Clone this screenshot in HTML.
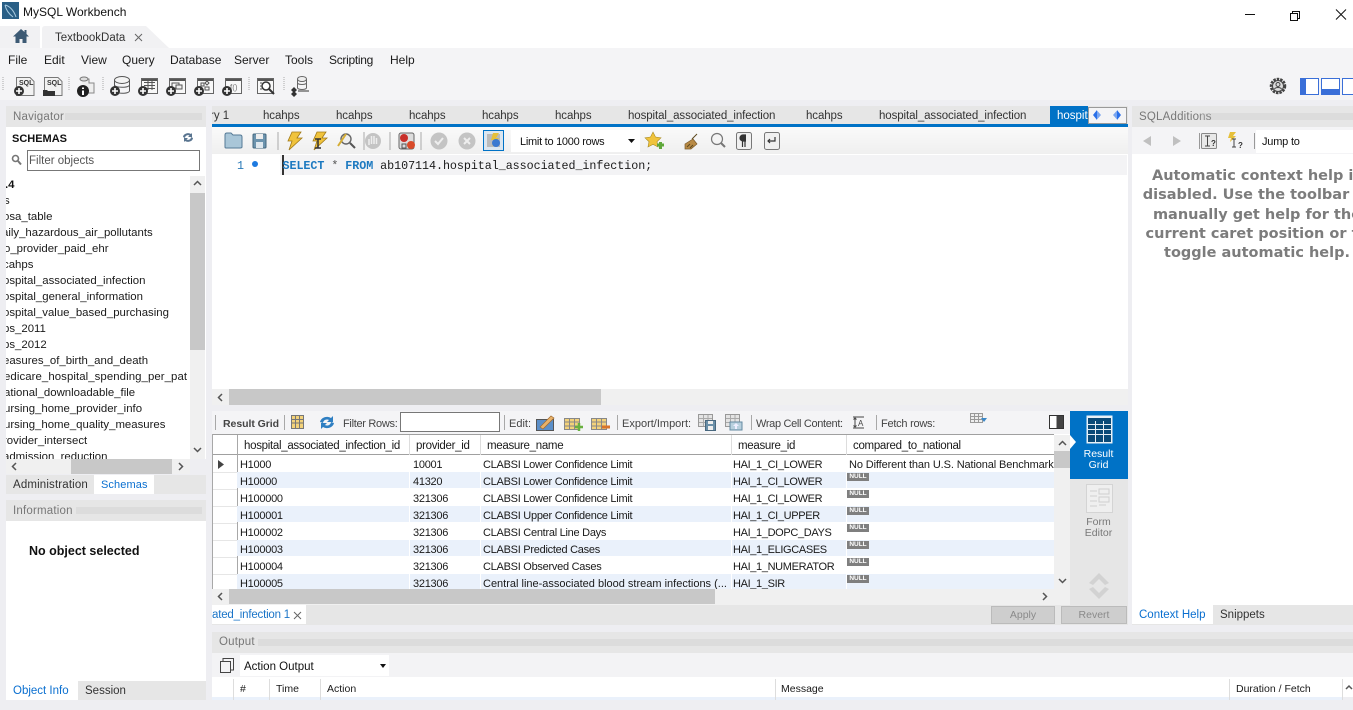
<!DOCTYPE html>
<html><head><meta charset="utf-8"><title>MySQL Workbench</title>
<style>
html,body{margin:0;padding:0;width:1353px;height:710px;overflow:hidden;background:#eeeef2;font-family:"Liberation Sans",sans-serif;font-size:11.5px;color:#1a1a1a}
.b,.t,svg.i{position:absolute}
.t{white-space:nowrap;line-height:16px}
.clip{position:absolute;overflow:hidden}
.dots{position:absolute;height:7px;background-image:radial-gradient(#bcbcbc 0.55px,transparent 0.65px);background-size:2px 2px}
.h{color:#777;font-size:11.5px;letter-spacing:.2px}
.m{font-size:12px}
.s{background:#c8c8c8}
.mono{font-family:"Liberation Mono",monospace;font-size:11.7px;letter-spacing:-.04px;color:#1a1a1a}
.n{position:absolute;left:847px;width:22px;height:8px;background:#7f7f7f;color:#fff;font-size:6.5px;font-weight:bold;line-height:8px;text-align:center}
.row{position:absolute;left:237px;width:817px;height:16px}
.sep{position:absolute;width:1px;background:#a8a8a8}
.gh{letter-spacing:-.3px}
.cells .t{letter-spacing:-.27px}
.cells .t.q{letter-spacing:-.35px}
.help{position:absolute;left:-50px;width:350px;text-align:center;white-space:nowrap;font:bold 14.500px/18px 'DejaVu Sans',sans-serif;color:#7c7c7c}
</style></head><body>

<!-- title bar -->
<div class="b" style="left:0;top:0;width:1353px;height:48px;background:#fff"></div>
<svg class="i" style="left:2px;top:2px" width="17" height="17" viewBox="0 0 17 17"><rect width="17" height="17" fill="#2a5f86"/><path d="M3 3C8 4 12 9 14 15M3 3c1 5 4 9 8 12" stroke="#a9cbe0" stroke-width="1" fill="none"/></svg>
<div class="t" style="left:23px;top:4px;font-size:12px;color:#111">MySQL Workbench</div>
<svg class="i" style="left:1245px;top:8px" width="108" height="13" viewBox="0 0 108 13" fill="none" stroke="#111" stroke-width="1"><path d="M0 6.500H10"/><path d="M45.500 5.500h7v7h-7zM47.500 5.500v-2h7v7h-2"/><path d="M91 1.500l10 10M101 1.500l-10 10"/></svg>

<!-- home and connection tab -->
<div class="b" style="left:0;top:26px;width:40px;height:22px;background:#f1f1f3"></div>
<svg class="i" style="left:12px;top:28px" width="18" height="16" viewBox="0 0 18 16"><path d="M9 1L1 8.500h2.500V15h4v-4h3v4h4V8.500H17L14.500 6V2h-2v2z" fill="#3d5a74"/></svg>
<svg class="i" style="left:42px;top:26px" width="128" height="22" viewBox="0 0 128 22"><path d="M0 22V3Q0 0 3 0H104L127 22z" fill="#f1f1f3"/></svg>
<div class="t" style="left:55px;top:30px;font-size:11.500px;color:#333">TextbookData</div>
<svg class="i" style="left:134px;top:33px" width="9" height="9" viewBox="0 0 9 9"><path d="M1 1l7 7M8 1L1 8" stroke="#666" stroke-width="1"/></svg>

<!-- menu -->
<div class="b" style="left:0;top:48px;width:1353px;height:52px;background:#f4f4f6"></div>
<div class="t m" style="left:8px;top:52px">File</div>
<div class="t m" style="left:44px;top:52px">Edit</div>
<div class="t m" style="left:81px;top:52px">View</div>
<div class="t m" style="left:122px;top:52px">Query</div>
<div class="t m" style="left:170px;top:52px">Database</div>
<div class="t m" style="left:234px;top:52px">Server</div>
<div class="t m" style="left:285px;top:52px">Tools</div>
<div class="t m" style="left:329px;top:52px;letter-spacing:-.3px">Scripting</div>
<div class="t m" style="left:390px;top:52px">Help</div>

<!-- main toolbar -->
<svg class="i" style="left:0;top:70px" width="340" height="30" viewBox="0 0 340 30">
<defs>
<g id="plus"><circle cx="0" cy="0" r="5" fill="#333"/><path d="M-3 0H3M0-3V3" stroke="#fff" stroke-width="1.600"/></g>
<g id="doc"><path d="M.500.500H14l4 4V18.500H.500z" fill="#f2f2f2" stroke="#777"/></g>
<g id="win"><rect x=".5" y=".5" width="16" height="15" fill="#f8f8f8" stroke="#666"/><rect x="1" y="1" width="15" height="2" fill="#555"/></g>
</defs>
<path d="M3 7v14M69 7v14M103 7v14M249 7v14M284 7v14" stroke="#aaa" stroke-dasharray="1 1"/>
<use href="#doc" x="16" y="7"/><text x="19" y="15" font-family="Liberation Sans" font-size="7" font-weight="bold" fill="#333">SQL</text><use href="#plus" x="19" y="21"/>
<use href="#doc" x="44" y="7"/><text x="47" y="15" font-family="Liberation Sans" font-size="7" font-weight="bold" fill="#333">SQL</text><path d="M43 26v-6h4l1 1h7v5z" fill="#333"/>
<path d="M80 9h9v4h5v10H88" fill="#eee" stroke="#888"/><ellipse cx="84" cy="9" rx="4" ry="2" fill="#ddd" stroke="#777"/><circle cx="83" cy="21" r="6" fill="#222"/><path d="M83 17.500v1.500M83 20.500V25" stroke="#fff" stroke-width="2"/>
<ellipse cx="122" cy="10" rx="7.500" ry="3.500" fill="#f4f4f4" stroke="#555"/><path d="M114.500 10v11c1 3 14 3 15 0V10M114.500 15c1 3 14 3 15 0" fill="none" stroke="#555"/><use href="#plus" x="115" y="21"/>
<use href="#win" x="141" y="8"/><path d="M144 12.500h11M144 15.500h11M144 18.500h11M148 11v9M152 11v9" stroke="#555"/><use href="#plus" x="143" y="21"/>
<use href="#win" x="169" y="8"/><rect x="172" y="13" width="7" height="5" fill="none" stroke="#555"/><rect x="176" y="15" width="6" height="4" fill="#eee" stroke="#555"/><use href="#plus" x="171" y="21"/>
<use href="#win" x="197" y="8"/><path d="M207 11l2 2-2 2-2-2zM205 17h4v3h-4zM201 13h3v3h-3z" fill="none" stroke="#555"/><use href="#plus" x="199" y="21"/>
<use href="#win" x="225" y="8"/><text x="230" y="20" font-family="Liberation Sans" font-size="8" fill="#777">f()</text><use href="#plus" x="227" y="21"/>
<use href="#win" x="257" y="8"/><circle cx="266" cy="16" r="4" fill="#fff" stroke="#333" stroke-width="1.500"/><path d="M269 19l5 5" stroke="#333" stroke-width="2"/><path d="M260 13h2M260 16h2M260 19h2" stroke="#555"/>
<ellipse cx="302" cy="9" rx="4.500" ry="2.500" fill="#eee" stroke="#666"/><path d="M297.500 9v9c1 2 8 2 9 0V9M297.500 13c1 2 8 2 9 0" fill="none" stroke="#666"/><path d="M298 21h11" stroke="#333"/><path d="M294 17l3 3-3 3-3-3zM294 21l3 3-3 3-3-3z" fill="#333"/>
</svg>
<svg class="i" style="left:1269px;top:77px" width="18" height="18" viewBox="0 0 18 18"><circle cx="9" cy="9" r="7" fill="none" stroke="#444" stroke-width="2.500" stroke-dasharray="2.500 1"/><circle cx="9" cy="9" r="5.500" fill="#ddd" stroke="#444"/><circle cx="9" cy="7.500" r="2" fill="none" stroke="#444"/><path d="M5.500 12c1-2 6-2 7 0" fill="none" stroke="#444"/></svg>
<svg class="i" style="left:1297px;top:77px" width="56" height="20" viewBox="0 0 56 20"><path d="M.5 2v16" stroke="#bbb" stroke-dasharray="1 1" transform="translate(-1 0)"/><rect x="3.500" y="1.500" width="18" height="16" fill="#fff" stroke="#3a6fd8"/><rect x="3" y="1" width="6" height="17" fill="#3a6fd8"/><rect x="24.500" y="1.500" width="18" height="16" fill="#fff" stroke="#3a6fd8"/><rect x="24" y="12" width="19" height="6" fill="#3a6fd8"/><rect x="45.500" y="1.500" width="18" height="16" fill="#fff" stroke="#3a6fd8"/></svg>

<!-- navigator -->
<div class="b" style="left:6px;top:106px;width:200px;height:21px;background:#e6e6e6"></div>
<div class="t h" style="left:13px;top:109px">Navigator</div>
<div class="dots" style="left:65px;top:113px;width:137px"></div>
<div class="b" style="left:6px;top:127px;width:200px;height:332px;background:#fff"></div>
<div class="t" style="left:12px;top:131px;font-weight:bold;font-size:11px;color:#111">SCHEMAS</div>
<svg class="i" style="left:182px;top:132px" width="12" height="11" viewBox="0 0 12 11"><path d="M1 5a5 4 0 0 1 8-3l1-1v4H6l1.500-1.500A3 3 0 0 0 3 6zM11 6a5 4 0 0 1-8 3l-1 1V6h4L4.500 7.500A3 3 0 0 0 9 5z" fill="#5a7590"/></svg>
<svg class="i" style="left:11px;top:154px" width="11" height="12" viewBox="0 0 11 12"><circle cx="4.500" cy="4.500" r="3" fill="none" stroke="#777" stroke-width="1.600"/><path d="M7 7l3 3.500" stroke="#777" stroke-width="2"/></svg>
<div class="b" style="left:27px;top:150px;width:171px;height:19px;background:#fff;border:1px solid #777"></div>
<div class="t" style="left:29px;top:153px;color:#555;font-size:11.5px">Filter objects</div>
<div class="clip" style="left:6px;top:177px;width:184px;height:282px;font-size:11.400px">
<div class="t" style="left:-1px;top:0;font-weight:bold;color:#111">.4</div>
<div class="t" style="left:-2px;top:16px">s</div>
<div class="t" style="left:-3px;top:32px">osa_table</div>
<div class="t" style="left:-4px;top:48px">aily_hazardous_air_pollutants</div>
<div class="t" style="left:-2px;top:64px">o_provider_paid_ehr</div>
<div class="t" style="left:-3px;top:80px">cahps</div>
<div class="t" style="left:-3px;top:96px">ospital_associated_infection</div>
<div class="t" style="left:-3px;top:112px">ospital_general_information</div>
<div class="t" style="left:-3px;top:128px">ospital_value_based_purchasing</div>
<div class="t" style="left:-3px;top:144px">ps_2011</div>
<div class="t" style="left:-3px;top:160px">ps_2012</div>
<div class="t" style="left:-3px;top:176px">easures_of_birth_and_death</div>
<div class="t" style="left:-2px;top:192px;letter-spacing:.08px">edicare_hospital_spending_per_pat</div>
<div class="t" style="left:-2px;top:208px">ational_downloadable_file</div>
<div class="t" style="left:-2px;top:224px">ursing_home_provider_info</div>
<div class="t" style="left:-2px;top:240px">ursing_home_quality_measures</div>
<div class="t" style="left:-3px;top:256px">rovider_intersect</div>
<div class="t" style="left:-3px;top:272px">admission_reduction</div>
</div>
<div class="b" style="left:190px;top:176px;width:15px;height:283px;background:#f0f0f0"></div>
<div class="b s" style="left:190px;top:193px;width:15px;height:157px"></div>
<svg class="i" style="left:193px;top:180px" width="9" height="6" viewBox="0 0 9 6"><path d="M1 5l3.500-3.500L8 5" fill="none" stroke="#555" stroke-width="1.500"/></svg>
<svg class="i" style="left:193px;top:447px" width="9" height="6" viewBox="0 0 9 6"><path d="M1 1l3.500 3.500L8 1" fill="none" stroke="#555" stroke-width="1.500"/></svg>
<div class="b" style="left:6px;top:459px;width:184px;height:15px;background:#f0f0f0"></div>
<div class="b s" style="left:71px;top:459px;width:101px;height:15px"></div>
<svg class="i" style="left:11px;top:462px" width="6" height="9" viewBox="0 0 6 9"><path d="M5 1L1.500 4.500 5 8" fill="none" stroke="#555" stroke-width="1.500"/></svg>
<svg class="i" style="left:178px;top:462px" width="6" height="9" viewBox="0 0 6 9"><path d="M1 1l3.500 3.500L1 8" fill="none" stroke="#555" stroke-width="1.500"/></svg>
<div class="b" style="left:6px;top:475px;width:200px;height:19px;background:#e6e6e6"></div>
<div class="b" style="left:94px;top:475px;width:60px;height:19px;background:#fff"></div>
<div class="t" style="left:13px;top:477px;color:#333;letter-spacing:.15px">Administration</div>
<div class="t" style="left:101px;top:477px;color:#0a6fd0;font-size:11px;letter-spacing:.1px">Schemas</div>

<!-- information -->
<div class="b" style="left:6px;top:500px;width:200px;height:21px;background:#e6e6e6"></div>
<div class="t h" style="left:13px;top:503px">Information</div>
<div class="dots" style="left:76px;top:507px;width:126px"></div>
<div class="b" style="left:6px;top:521px;width:200px;height:160px;background:#fff"></div>
<div class="t" style="left:29px;top:543px;font-weight:bold;font-size:12.5px;color:#111">No object selected</div>
<div class="b" style="left:6px;top:681px;width:200px;height:19px;background:#e6e6e6"></div>
<div class="b" style="left:6px;top:681px;width:72px;height:19px;background:#fff"></div>
<div class="t" style="left:13px;top:683px;color:#0a6fd0">Object Info</div>
<div class="t" style="left:85px;top:683px;color:#333">Session</div>

<!-- query tabs -->
<div class="b" style="left:212px;top:106px;width:916px;height:18px;background:#e6e6e6"></div>
<div class="b" style="left:212px;top:124px;width:916px;height:3px;background:#0072c6"></div>
<div class="clip" style="left:212px;top:107px;width:838px;height:17px">
<div class="t" style="left:-2px;top:1px;color:#333">ry 1</div>
<div class="t" style="left:51px;top:1px;color:#333;letter-spacing:-.1px">hcahps</div>
<div class="t" style="left:124px;top:1px;color:#333;letter-spacing:-.1px">hcahps</div>
<div class="t" style="left:197px;top:1px;color:#333;letter-spacing:-.1px">hcahps</div>
<div class="t" style="left:270px;top:1px;color:#333;letter-spacing:-.1px">hcahps</div>
<div class="t" style="left:343px;top:1px;color:#333;letter-spacing:-.1px">hcahps</div>
<div class="t" style="left:416px;top:1px;color:#333;letter-spacing:-.1px">hospital_associated_infection</div>
<div class="t" style="left:594px;top:1px;color:#333;letter-spacing:-.1px">hcahps</div>
<div class="t" style="left:667px;top:1px;color:#333;letter-spacing:-.1px">hospital_associated_infection</div>
</div>
<div class="clip" style="left:1050px;top:106px;width:38px;height:18px;background:#0072c6"><div class="t" style="left:7px;top:2px;color:#fff">hospital</div></div>
<div class="b" style="left:1088px;top:107px;width:37px;height:15px;background:#f4f4f6;border:1px solid #9a9a9a"></div>
<svg class="i" style="left:1088px;top:107px" width="40" height="16" viewBox="0 0 40 16"><path d="M5 8l4-5v10z" fill="#2a6fe8"/><path d="M9 3.500l4 4.500-4 4.500z" fill="#7aa6f0"/><path d="M33 8l-4-5v10z" fill="#2a6fe8"/><path d="M29 3.500L25 8l4 4.500z" fill="#7aa6f0"/></svg>

<!-- SQL toolbar -->
<div class="b" style="left:212px;top:127px;width:916px;height:27px;background:linear-gradient(#fafafa,#efefef)"></div>
<svg class="i" style="left:222px;top:130px" width="560" height="22" viewBox="0 0 560 22">
<path d="M3 5q0-2 2-2h4l2 2h7q2 0 2 2v10q0 1-2 1H4q-1 0-1-1z" fill="#a9c6d8" stroke="#557a96"/>
<rect x="31" y="4" width="13" height="14" rx="1" fill="#6d94ae" stroke="#44677f"/><rect x="34" y="4" width="7" height="5" fill="#eee"/><rect x="34" y="12" width="7" height="6" fill="#dfe8ee"/>
<path d="M56 2v18M142 2v18M168 2v18M199 2v18M343 2v18M375 2v18" stroke="#aaa"/>
<path d="M70 2h9l-4 6h5L67 20l3-9h-4z" fill="#f0c33c" stroke="#a17a18" stroke-width=".8"/>
<path d="M95 2h9l-4 6h5L92 20l3-9h-4z" fill="#f0c33c" stroke="#a17a18" stroke-width=".8"/><path d="M93 9h6M96 9v9M93 18h6" stroke="#333" stroke-width="1.500"/>
<circle cx="124" cy="9" r="5" fill="#eee" stroke="#666" stroke-width="1.400"/><path d="M128 13l5 5" stroke="#555" stroke-width="2"/><path d="M116 16l8-12" stroke="#d5ad35" stroke-width="2"/>
<circle cx="151" cy="11" r="8" fill="#c4c4c4"/><path d="M147 15V9M149.500 14V6M152 14V6M154.500 14V8" stroke="#eee" stroke-width="1.500"/>
<rect x="177" y="3" width="15" height="16" rx="2" fill="#ddd" stroke="#666"/><circle cx="182" cy="8" r="4" fill="#c8302a"/><circle cx="189" cy="15" r="4" fill="#d84b2a"/><path d="M180 14h4v4h-4z" fill="none" stroke="#555"/>
<circle cx="217" cy="11" r="8.500" fill="#c4c4c4"/><path d="M213 11l3 3 5-6" fill="none" stroke="#eee" stroke-width="2"/>
<circle cx="245" cy="11" r="8.500" fill="#c4c4c4"/><path d="M242 8l6 6M248 8l-6 6" stroke="#eee" stroke-width="2"/>
<rect x="261.500" y=".5" width="20" height="20" fill="#dbe6f0" stroke="#0072c6"/><rect x="265" y="4" width="13" height="13" fill="#bbb"/><path d="M271 3h6l-3 5h3l-7 8 2-6h-3z" fill="#e6c03a"/><circle cx="274" cy="13" r="4" fill="#3a78d0"/>
<path d="M442 1l2.500 5 5.500.8-4 3.800 1 5.400-5-2.600-5 2.600 1-5.400-4-3.800 5.500-.8z" fill="#f0c33c" stroke="#a98b20" stroke-width=".6" transform="translate(-11 1)"/><path d="M439 14h7M442.500 11v7" stroke="#5fa83a" stroke-width="3" transform="translate(-4 1)"/>
<path d="M463 14l8-5 4 5-6 5h-6z" fill="#b88a45" stroke="#7a5a2a" stroke-width=".7"/><path d="M470 9l5-5M465 17l3-3M468 18l3-3" stroke="#5d4a20" stroke-width="1"/>
<circle cx="495" cy="9" r="5.500" fill="#f4f4f4" stroke="#777" stroke-width="1.200"/><path d="M499 13l4 4" stroke="#777" stroke-width="2"/>
<rect x="514.500" y="2.500" width="15" height="17" rx="2" fill="#f0f0f0" stroke="#777"/><path d="M523 5v12M520.500 5v12M524 5h-3a3 3 0 0 0 0 6h3" fill="#333" stroke="#333" stroke-width="1.200"/>
<rect x="542.500" y="2.500" width="15" height="17" rx="2" fill="#f0f0f0" stroke="#777"/><path d="M553 7v4h-7m2-2l-2 2 2 2" fill="none" stroke="#333" stroke-width="1.200"/>
</svg>
<div class="b" style="left:511px;top:130px;width:129px;height:22px;background:#fff"></div>
<div class="t" style="left:520px;top:134px;color:#111;font-size:11px;letter-spacing:-.27px">Limit to 1000 rows</div>
<svg class="i" style="left:628px;top:139px" width="7" height="4"><path d="M0 0h7L3.500 4z" fill="#111"/></svg>

<!-- editor -->
<div class="b" style="left:212px;top:154px;width:916px;height:251px;background:#fff"></div>
<div class="b" style="left:212px;top:155px;width:915px;height:20px;background:#f3f3f5"></div>
<div class="b" style="left:212px;top:155px;width:68px;height:20px;background:#fff"></div>
<div class="t mono" style="left:237px;top:158px;color:#2a7ab8">1</div>
<div class="b" style="left:252px;top:161px;width:6px;height:6px;border-radius:50%;background:#1d7ae0"></div>
<div class="b" style="left:282px;top:155px;width:2px;height:20px;background:#333"></div>
<div class="t mono" style="left:282.500px;top:158px;white-space:pre"><span style="color:#1c79c0;font-weight:bold">SELECT</span> <span style="color:#555">*</span> <span style="color:#1c79c0;font-weight:bold">FROM</span> ab107114.hospital_associated_infection;</div>
<div class="b" style="left:212px;top:389px;width:916px;height:16px;background:#f0f0f0"></div>
<div class="b s" style="left:229px;top:389px;width:372px;height:16px"></div>
<svg class="i" style="left:217px;top:393px" width="6" height="9" viewBox="0 0 6 9"><path d="M5 1L1.500 4.500 5 8" fill="none" stroke="#555" stroke-width="1.500"/></svg>

<!-- result toolbar -->
<div class="b" style="left:212px;top:411px;width:858px;height:23px;background:#f4f4f6"></div>
<div class="sep" style="left:215px;top:415px;height:15px"></div>
<div class="t" style="left:223px;top:416px;font-weight:bold;font-size:10.500px;color:#444;letter-spacing:-.05px">Result Grid</div>
<div class="sep" style="left:284px;top:415px;height:15px"></div>
<svg class="i" style="left:291px;top:414px" width="14" height="17" viewBox="0 0 14 17"><rect x=".5" y="1.500" width="12" height="13" fill="#f3d27a" stroke="#777"/><path d="M4.500 2v12M8.500 2v12M1 5.500h11M1 9h11" stroke="#777"/></svg>
<svg class="i" style="left:319px;top:415px" width="16" height="15" viewBox="0 0 16 15"><path d="M1 7a7 6 0 0 1 11-4l2-2v6H8l2-2A4 4 0 0 0 4 8zM15 8a7 6 0 0 1-11 4l-2 2V8h6l-2 2a4 4 0 0 0 6-3z" fill="#2f7fc2"/></svg>
<div class="t" style="left:343px;top:416px;color:#444;font-size:11px;letter-spacing:-.3px">Filter Rows:</div>
<div class="b" style="left:400px;top:412px;width:98px;height:18px;background:#fff;border:1px solid #777"></div>
<div class="sep" style="left:504px;top:415px;height:15px"></div>
<div class="t" style="left:509px;top:416px;color:#444;font-size:11px">Edit:</div>
<svg class="i" style="left:536px;top:413px" width="76" height="19" viewBox="0 0 76 19"><rect x=".5" y="6.500" width="17" height="11" fill="#5b8fc9" stroke="#555"/><path d="M4 14L15 3l3 2L7 16z" fill="#e8b26a" stroke="#a06a30" stroke-width=".7"/>
<rect x="28.500" y="5.500" width="15" height="11" fill="#f3d27a" stroke="#888"/><path d="M29 9h14M29 13h14M33.500 6v10M38.500 6v10" stroke="#888"/><path d="M39 14h8M43 10v8" stroke="#69b040" stroke-width="2.500"/>
<rect x="55.500" y="5.500" width="15" height="11" fill="#f3d27a" stroke="#888"/><path d="M56 9h14M56 13h14M60.500 6v10M65.500 6v10" stroke="#888"/><path d="M66 14h8" stroke="#d8742a" stroke-width="3"/></svg>
<div class="sep" style="left:617px;top:415px;height:15px"></div>
<div class="t" style="left:622px;top:416px;color:#444;font-size:11px">Export/Import:</div>
<svg class="i" style="left:698px;top:413px" width="46" height="19" viewBox="0 0 46 19"><rect x=".5" y="1.500" width="14" height="12" fill="#e4e4e4" stroke="#999"/><path d="M1 5.500h13M1 9.500h13M5.500 2v11M10 2v11" stroke="#aaa"/><rect x="7.500" y="7.500" width="10" height="10" fill="#6a8fa8" stroke="#48677e"/><rect x="10" y="8" width="5" height="3" fill="#eee"/><rect x="10" y="13" width="5" height="4" fill="#eee"/>
<rect x="27.500" y="1.500" width="14" height="12" fill="#e4e4e4" stroke="#999"/><path d="M28 5.500h13M28 9.500h13M32.500 2v11M37 2v11" stroke="#aaa"/><path d="M32 9h12v8H32z" fill="#b8d0de" stroke="#648aa3"/><path d="M38 10l3 3h-2v3h-2v-3h-2z" fill="#eef"/></svg>
<div class="sep" style="left:751px;top:415px;height:15px"></div>
<div class="t" style="left:756px;top:416px;color:#444;font-size:11px;letter-spacing:-.33px">Wrap Cell Content:</div>
<svg class="i" style="left:852px;top:416px" width="13" height="13" viewBox="0 0 13 13"><path d="M1 1h11M1 12h11M3 2v9M1.500 3.500L3 2l1.500 1.500M1.500 9.500L3 11l1.500-1.500" stroke="#444" fill="none"/><text x="6" y="10" font-family="Liberation Sans" font-size="8" fill="#444">A</text></svg>
<div class="sep" style="left:876px;top:415px;height:15px"></div>
<div class="t" style="left:881px;top:416px;color:#444;font-size:11px;letter-spacing:-.25px">Fetch rows:</div>
<svg class="i" style="left:970px;top:413px" width="18" height="13" viewBox="0 0 18 13"><rect x=".5" y=".5" width="12" height="9" fill="#eee" stroke="#999"/><path d="M1 3.500h11M1 6.500h11M4.500 1v8M8.500 1v8" stroke="#999"/><path d="M11 5h6l-3 4z" fill="#3a88c8"/></svg>
<div class="b" style="left:1049px;top:415px;width:13px;height:12px;border:1px solid #333;background:linear-gradient(90deg,#fff 50%,#444 50%)"></div>

<!-- grid -->
<div class="b" style="left:212px;top:434px;width:858px;height:155px;background:#fff;overflow:hidden"></div>
<div class="b" style="left:212px;top:434px;width:842px;height:1px;background:#a0a0a0"></div>
<div class="b" style="left:212px;top:454px;width:842px;height:1px;background:#a0a0a0"></div>
<div class="b" style="left:212px;top:434px;width:1px;height:155px;background:#a8a8a8"></div>
<div class="b" style="left:237px;top:435px;width:1px;height:154px;background:#a8a8a8"></div>
<div class="b" style="left:409px;top:435px;width:1px;height:20px;background:#ddd"></div>
<div class="b" style="left:480px;top:435px;width:1px;height:20px;background:#ddd"></div>
<div class="b" style="left:731px;top:435px;width:1px;height:20px;background:#ddd"></div>
<div class="b" style="left:846px;top:435px;width:1px;height:20px;background:#ddd"></div>
<div class="row" style="top:472px;background:#eaf1fb"></div>
<div class="row" style="top:506px;background:#eaf1fb"></div>
<div class="row" style="top:540px;background:#eaf1fb"></div>
<div class="row" style="top:574px;background:#eaf1fb;height:15px"></div>
<div class="b" style="left:409px;top:455px;width:1px;height:134px;background:#fff"></div>
<div class="b" style="left:480px;top:455px;width:1px;height:134px;background:#fff"></div>
<div class="b" style="left:731px;top:455px;width:1px;height:134px;background:#fff"></div>
<div class="b" style="left:846px;top:455px;width:1px;height:134px;background:#fff"></div>
<div class="b" style="left:213px;top:472px;width:24px;height:1px;background:#e6e6e6"></div>
<div class="b" style="left:213px;top:489px;width:24px;height:1px;background:#e6e6e6"></div>
<div class="b" style="left:213px;top:506px;width:24px;height:1px;background:#e6e6e6"></div>
<div class="b" style="left:213px;top:523px;width:24px;height:1px;background:#e6e6e6"></div>
<div class="b" style="left:213px;top:540px;width:24px;height:1px;background:#e6e6e6"></div>
<div class="b" style="left:213px;top:557px;width:24px;height:1px;background:#e6e6e6"></div>
<div class="b" style="left:213px;top:574px;width:24px;height:1px;background:#e6e6e6"></div>
<svg class="i" style="left:218px;top:460px" width="7" height="9"><path d="M0 0l6 4.500L0 9z" fill="#444"/></svg>
<div class="t gh" style="left:244px;top:438px">hospital_associated_infection_id</div>
<div class="t gh" style="left:416px;top:438px">provider_id</div>
<div class="t gh" style="left:487px;top:438px">measure_name</div>
<div class="t gh" style="left:738px;top:438px">measure_id</div>
<div class="t gh" style="left:853px;top:438px">compared_to_national</div>

<div class="clip cells" style="left:212px;top:457px;width:842px;height:132px;font-size:11px">
<div class="t" style="left:28px;top:0">H1000</div><div class="t" style="left:201px;top:0">10001</div><div class="t" style="left:271px;top:0">CLABSI Lower Confidence Limit</div><div class="t q" style="left:521px;top:0">HAI_1_CI_LOWER</div><div class="t" style="left:637px;top:0;width:205px;overflow:hidden;letter-spacing:-.12px">No Different than U.S. National Benchmark</div>
<div class="t" style="left:28px;top:17px">H10000</div><div class="t" style="left:201px;top:17px">41320</div><div class="t" style="left:271px;top:17px">CLABSI Lower Confidence Limit</div><div class="t q" style="left:521px;top:17px">HAI_1_CI_LOWER</div>
<div class="t" style="left:28px;top:34px">H100000</div><div class="t" style="left:201px;top:34px">321306</div><div class="t" style="left:271px;top:34px">CLABSI Lower Confidence Limit</div><div class="t q" style="left:521px;top:34px">HAI_1_CI_LOWER</div>
<div class="t" style="left:28px;top:51px">H100001</div><div class="t" style="left:201px;top:51px">321306</div><div class="t" style="left:271px;top:51px">CLABSI Upper Confidence Limit</div><div class="t q" style="left:521px;top:51px">HAI_1_CI_UPPER</div>
<div class="t" style="left:28px;top:68px">H100002</div><div class="t" style="left:201px;top:68px">321306</div><div class="t" style="left:271px;top:68px">CLABSI Central Line Days</div><div class="t q" style="left:521px;top:68px">HAI_1_DOPC_DAYS</div>
<div class="t" style="left:28px;top:85px">H100003</div><div class="t" style="left:201px;top:85px">321306</div><div class="t" style="left:271px;top:85px">CLABSI Predicted Cases</div><div class="t q" style="left:521px;top:85px">HAI_1_ELIGCASES</div>
<div class="t" style="left:28px;top:102px">H100004</div><div class="t" style="left:201px;top:102px">321306</div><div class="t" style="left:271px;top:102px">CLABSI Observed Cases</div><div class="t q" style="left:521px;top:102px">HAI_1_NUMERATOR</div>
<div class="t" style="left:28px;top:119px">H100005</div><div class="t" style="left:201px;top:119px">321306</div><div class="t" style="left:271px;top:119px;letter-spacing:0">Central line-associated blood stream infections (...</div><div class="t q" style="left:521px;top:119px">HAI_1_SIR</div>
</div>
<div class="n" style="top:473px">NULL</div>
<div class="n" style="top:490px">NULL</div>
<div class="n" style="top:507px">NULL</div>
<div class="n" style="top:524px">NULL</div>
<div class="n" style="top:541px">NULL</div>
<div class="n" style="top:558px">NULL</div>
<div class="n" style="top:575px">NULL</div>
<div class="b" style="left:1054px;top:435px;width:16px;height:154px;background:#f0f0f0"></div>
<div class="b s" style="left:1054px;top:451px;width:16px;height:17px"></div>
<svg class="i" style="left:1058px;top:440px" width="9" height="6" viewBox="0 0 9 6"><path d="M1 5l3.500-3.500L8 5" fill="none" stroke="#555" stroke-width="1.500"/></svg>
<svg class="i" style="left:1058px;top:578px" width="9" height="6" viewBox="0 0 9 6"><path d="M1 1l3.500 3.500L8 1" fill="none" stroke="#555" stroke-width="1.500"/></svg>
<div class="b" style="left:212px;top:589px;width:858px;height:16px;background:#f0f0f0"></div>
<div class="b s" style="left:229px;top:589px;width:486px;height:15px"></div>
<svg class="i" style="left:217px;top:592px" width="6" height="9" viewBox="0 0 6 9"><path d="M5 1L1.500 4.500 5 8" fill="none" stroke="#555" stroke-width="1.500"/></svg>
<svg class="i" style="left:1042px;top:592px" width="6" height="9" viewBox="0 0 6 9"><path d="M1 1l3.500 3.500L1 8" fill="none" stroke="#555" stroke-width="1.500"/></svg>

<!-- result side panel -->
<div class="b" style="left:1070px;top:411px;width:58px;height:194px;background:#e6e6e6"></div>
<div class="b" style="left:1070px;top:411px;width:58px;height:68px;background:#0072c6"></div>
<svg class="i" style="left:1070px;top:435px" width="6" height="14"><path d="M0 0l6 7-6 7z" fill="#fff"/></svg>
<svg class="i" style="left:1086px;top:415px" width="27" height="29" viewBox="0 0 27 29"><rect x=".5" y=".5" width="26" height="28" fill="#e8f0f6"/><rect x="2" y="3" width="23" height="24" fill="#0a4a78"/><path d="M2 9.500h23M2 14.500h23M2 19.500h23M9.500 6v21M17.500 6v21" stroke="#e8f0f6"/></svg>
<div class="t" style="left:1070px;top:449px;width:57px;text-align:center;color:#fff;font-size:10.500px;line-height:11px">Result<br>Grid</div>
<svg class="i" style="left:1086px;top:484px" width="27" height="29" viewBox="0 0 27 29"><rect x=".5" y=".5" width="26" height="28" fill="#efefef" stroke="#d4d4d4"/><path d="M4 7h7M4 12h7M4 17h7M4 22h7M13 5h10v5H13zM13 13h10v5H13zM13 21h7" stroke="#cfcfcf" fill="none"/></svg>
<div class="t" style="left:1070px;top:517px;width:57px;text-align:center;color:#777;font-size:10.500px;line-height:11px">Form<br>Editor</div>
<svg class="i" style="left:1088px;top:570px" width="22" height="32" viewBox="0 0 22 32"><path d="M1 13L11 3l10 10-4 2-6-6-6 6zM1 19l10 10 10-10-4-2-6 6-6-6z" fill="#d2d2d2"/></svg>

<!-- apply bar -->
<div class="b" style="left:212px;top:605px;width:916px;height:20px;background:#e6e6e6"></div>
<div class="b" style="left:212px;top:605px;width:94px;height:19px;background:#fff"></div>
<div class="t" style="left:212px;top:607px;font-size:11.5px;color:#1a74c8;letter-spacing:-.2px">ated_infection 1</div>
<svg class="i" style="left:293px;top:611px" width="9" height="9" viewBox="0 0 9 9"><path d="M1 1l7 7M8 1L1 8" stroke="#666"/></svg>
<div class="b" style="left:991px;top:606px;width:62px;height:16px;background:#cecece;border:1px solid #bbb;color:#8a8a8a;text-align:center;font-size:10.500px;line-height:16px">Apply</div>
<div class="b" style="left:1061px;top:606px;width:64px;height:16px;background:#cecece;border:1px solid #bbb;color:#8a8a8a;text-align:center;font-size:10.500px;line-height:16px">Revert</div>

<!-- output -->
<div class="b" style="left:212px;top:632px;width:1141px;height:21px;background:#e6e6e6"></div>
<div class="t h" style="left:219px;top:634px">Output</div>
<div class="dots" style="left:258px;top:639px;width:1095px"></div>
<div class="b" style="left:212px;top:653px;width:1141px;height:24px;background:#f3f3f5"></div>
<svg class="i" style="left:220px;top:658px" width="14" height="15" viewBox="0 0 14 15"><rect x=".5" y="3.500" width="10" height="11" fill="#f3f3f5" stroke="#444"/><path d="M3 3V.5h10.500V12H11" fill="none" stroke="#444"/></svg>
<div class="b" style="left:240px;top:655px;width:149px;height:21px;background:#fff"></div>
<div class="t" style="left:244px;top:659px;font-size:11.5px;color:#111">Action Output</div>
<svg class="i" style="left:380px;top:664px" width="6" height="4"><path d="M0 0h6L3 4z" fill="#111"/></svg>
<div class="b" style="left:212px;top:677px;width:1141px;height:20px;background:#fff"></div>
<div class="b" style="left:212px;top:697px;width:1141px;height:13px;background:#eeeef2"></div>
<div class="b" style="left:212px;top:697px;width:1130px;height:3px;background:#eaf1fb"></div>
<div class="t" style="left:240px;top:681px;font-size:10.500px">#</div>
<div class="t" style="left:276px;top:681px;font-size:10.500px">Time</div>
<div class="t" style="left:327px;top:681px;font-size:10.500px">Action</div>
<div class="t" style="left:781px;top:681px;font-size:10.500px">Message</div>
<div class="t" style="left:1236px;top:681px;font-size:10.500px">Duration / Fetch</div>
<div class="b" style="left:233px;top:679px;width:1px;height:21px;background:#ddd"></div>
<div class="b" style="left:269px;top:679px;width:1px;height:21px;background:#ddd"></div>
<div class="b" style="left:320px;top:679px;width:1px;height:21px;background:#ddd"></div>
<div class="b" style="left:775px;top:679px;width:1px;height:21px;background:#ddd"></div>
<div class="b" style="left:1229px;top:679px;width:1px;height:21px;background:#ddd"></div>
<div class="b" style="left:1342px;top:679px;width:1px;height:21px;background:#ddd"></div>
<svg class="i" style="left:1345px;top:684px" width="8" height="6" viewBox="0 0 8 6"><path d="M1 5l3-3 3 3" fill="none" stroke="#555" stroke-width="1.500"/></svg>

<!-- SQL additions -->
<div class="b" style="left:1132px;top:106px;width:221px;height:21px;background:#e6e6e6"></div>
<div class="t h" style="left:1139px;top:109px">SQLAdditions</div>
<div class="dots" style="left:1199px;top:113px;width:154px"></div>
<div class="b" style="left:1132px;top:127px;width:221px;height:27px;background:#f4f4f6"></div>
<svg class="i" style="left:1140px;top:130px" width="115" height="22" viewBox="0 0 115 22"><path d="M11 6v10L3 11zM33 6v10l8-5z" fill="#c0c0c0"/><path d="M59.500 3v16M114.500 3v16" stroke="#999"/><rect x="60.500" y="3.500" width="15" height="15" rx="1" fill="#e8e8e8" stroke="#888" transform="translate(1 0)"/><path d="M65 6h5M67.500 6v10M65 16h5" stroke="#444"/><text x="71" y="16" font-family="Liberation Sans" font-size="8" font-weight="bold" fill="#333">?</text><path d="M90 2h6l-3 4h3l-6 6 1-4h-3z" fill="#e6c03a"/><path d="M92 9h4M94 9v8M92 17h4" stroke="#444"/><text x="98" y="18" font-family="Liberation Sans" font-size="8" font-weight="bold" fill="#333">?</text></svg>
<div class="b" style="left:1256px;top:130px;width:97px;height:23px;background:#fff"></div>
<div class="t" style="left:1262px;top:134px;font-size:11px;color:#111;letter-spacing:-.2px">Jump to</div>
<div class="b" style="left:1132px;top:154px;width:221px;height:451px;background:#fff"></div>
<div class="clip" style="left:1132px;top:165px;width:221px;height:100px">
<div class="help" style="top:2px">Automatic context help is</div>
<div class="help" style="top:21px">disabled. Use the toolbar to</div>
<div class="help" style="top:41px">manually get help for the</div>
<div class="help" style="top:60px">current caret position or to</div>
<div class="help" style="top:79px">toggle automatic help.</div>
</div>
<div class="b" style="left:1132px;top:605px;width:221px;height:20px;background:#e6e6e6"></div>
<div class="b" style="left:1132px;top:605px;width:81px;height:19px;background:#fff"></div>
<div class="t" style="left:1139px;top:607px;color:#0a6fd0;font-size:11.500px">Context Help</div>
<div class="t" style="left:1220px;top:607px;color:#333;font-size:11.500px">Snippets</div>
</body></html>
